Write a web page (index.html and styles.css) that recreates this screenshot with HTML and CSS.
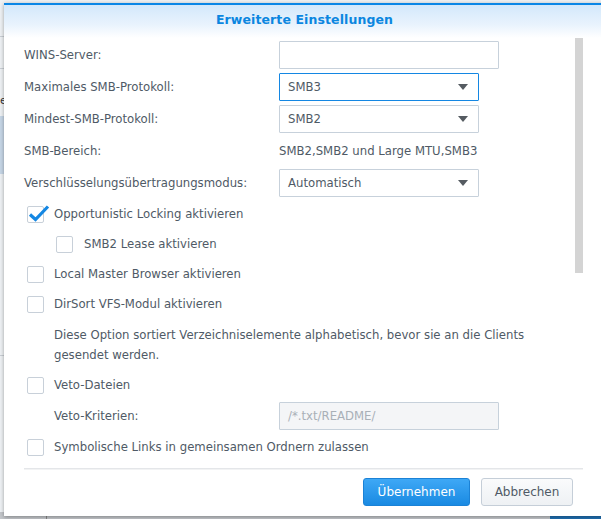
FILE: index.html
```html
<!DOCTYPE html>
<html lang="de">
<head>
<meta charset="utf-8">
<link rel="stylesheet" href="styles.css">
</head>
<body>
<div class="desk">
  <div class="side">
    <div class="side-line l1"></div>
    <div class="side-line l2"></div>
    <div class="side-text">el</div>
    <div class="side-sel"></div>
    <div class="side-line l3"></div>
  </div>
  <div class="taskbar"><div class="task-sep"></div><div class="task-blue"></div></div>

  <div class="dialog">
    <div class="hdr">Erweiterte Einstellungen</div>
    <div class="content">
      <div class="scroll">
        <div class="row">
          <span class="lbl">WINS-Server:</span>
          <div class="field wide"></div>
        </div>
        <div class="row">
          <span class="lbl">Maximales SMB-Protokoll:</span>
          <div class="field select focus"><span>SMB3</span><span class="arrow"></span></div>
        </div>
        <div class="row">
          <span class="lbl">Mindest-SMB-Protokoll:</span>
          <div class="field select"><span>SMB2</span><span class="arrow"></span></div>
        </div>
        <div class="row">
          <span class="lbl">SMB-Bereich:</span>
          <span class="value">SMB2,SMB2 und Large MTU,SMB3</span>
        </div>
        <div class="row">
          <span class="lbl">Verschlüsselungsübertragungsmodus:</span>
          <div class="field select"><span>Automatisch</span><span class="arrow"></span></div>
        </div>

        <div class="cbrow">
          <span class="cb checked"><svg class="tick" width="22" height="18" viewBox="0 0 22 18"><path d="M2 9.5 L7.5 14.5 L20 1.5" fill="none" stroke="#1487e3" stroke-width="3.2" stroke-linecap="butt" stroke-linejoin="miter"/></svg></span>
          <span class="cblbl">Opportunistic Locking aktivieren</span>
        </div>
        <div class="cbrow sub">
          <span class="cb"></span>
          <span class="cblbl">SMB2 Lease aktivieren</span>
        </div>
        <div class="cbrow">
          <span class="cb"></span>
          <span class="cblbl">Local Master Browser aktivieren</span>
        </div>
        <div class="cbrow">
          <span class="cb"></span>
          <span class="cblbl">DirSort VFS-Modul aktivieren</span>
        </div>
        <p class="desc">Diese Option sortiert Verzeichniselemente alphabetisch, bevor sie an die Clients gesendet werden.</p>
        <div class="cbrow">
          <span class="cb"></span>
          <span class="cblbl">Veto-Dateien</span>
        </div>
        <div class="row indent">
          <span class="lbl short">Veto-Kriterien:</span>
          <div class="field wide disabled"><span>/*.txt/README/</span></div>
        </div>
        <div class="cbrow">
          <span class="cb"></span>
          <span class="cblbl">Symbolische Links in gemeinsamen Ordnern zulassen</span>
        </div>
      </div>
      <div class="scrollbar"></div>
    </div>
    <div class="footer">
      <div class="divider"></div>
      <div class="buttons">
        <button class="btn primary">Übernehmen</button>
        <button class="btn">Abbrechen</button>
      </div>
    </div>
  </div>
</div>
</body>
</html>
```

FILE: styles.css
```css
* { box-sizing: border-box; }
html, body { margin: 0; padding: 0; }
body {
  width: 601px;
  height: 519px;
  overflow: hidden;
  font-family: "DejaVu Sans", Verdana, sans-serif;
  font-size: 11.7px;
  color: #4f5a66;
}
.desk {
  position: relative;
  width: 601px;
  height: 519px;
  background: #eef1f4;
  overflow: hidden;
}
.side { position: absolute; left: 0; top: 0; width: 10px; height: 519px; overflow: hidden; }
.side-line { position: absolute; left: 0; width: 10px; height: 1px; background: #c9ced4; }
.side-line.l1 { top: 36px; }
.side-line.l2 { top: 68px; }
.side-line.l3 { top: 355px; }
.side-sel { position: absolute; left: 0; top: 116px; width: 10px; height: 58px; background: #c6d6e6; }
.side-text { position: absolute; left: 0; top: 94px; font-size: 11px; color: #333; }
.taskbar { position: absolute; left: 0; top: 512px; width: 601px; height: 7px; background: #c3c6ca; }
.task-sep { position: absolute; left: 46px; top: 0; width: 1px; height: 7px; background: #888; }
.task-blue { position: absolute; left: 550px; top: 0; width: 51px; height: 7px; background: #1f6fb2; }

.dialog {
  position: absolute;
  left: 4px;
  top: 3px;
  width: 601px;
  height: 513px;
  background: #fff;
  border-top: 2px solid #0a86e6;
  box-shadow: 0 1px 4px rgba(0,0,0,0.35);
  display: flex;
  flex-direction: column;
}
.hdr {
  height: 33px;
  flex: none;
  background: linear-gradient(to bottom, #d3e8fb 0%, #e9f3fd 60%, #ffffff 100%);
  text-align: center;
  font-weight: bold;
  font-size: 12.5px;
  color: #0b86e0;
  padding-top: 7px;
  line-height: 16px;
  letter-spacing: 0.1px;
}
.content {
  position: relative;
  height: 427px;
  flex: none;
}
.scroll {
  padding: 2px 0 0 20px;
  display: flex;
  flex-direction: column;
}
.scrollbar {
  position: absolute;
  left: 571px;
  top: 0;
  width: 8px;
  height: 235px;
  background: #d4d4d4;
}
.row {
  height: 32px;
  display: flex;
  align-items: center;
}
.row:first-child { margin-top: -1px; }
.lbl { width: 255px; flex: none; }
.row.indent { padding-left: 30px; }
.lbl.short { width: 225px; }
.field {
  height: 28px;
  border: 1px solid #c7d1db;
  border-radius: 1px;
  display: flex;
  align-items: center;
  padding: 0 8px;
  width: 200px;
  background: #fff;
}
.field.wide { width: 220px; }
.field.select { justify-content: space-between; padding-right: 10px; }
.field.focus { border-color: #1487e3; }
.field.disabled { background: #f4f5f7; color: #a9b0b7; }
.arrow {
  width: 0; height: 0;
  border-left: 5px solid transparent;
  border-right: 5px solid transparent;
  border-top: 6px solid #555b61;
}
.cbrow {
  height: 30px;
  display: flex;
  align-items: center;
  padding-left: 3px;
}
.cbrow.sub { padding-left: 32px; }
.cb {
  position: relative;
  width: 17px;
  height: 17px;
  border: 1px solid #c8d0d9;
  border-radius: 2px;
  flex: none;
  margin-right: 10px;
  background: #fff;
}
.cbrow.sub .cb { margin-right: 11px; }
.tick { position: absolute; left: 0; top: -2px; overflow: visible; }
.desc {
  margin: 0;
  padding: 6px 40px 5px 30px;
  line-height: 20px;
}
.footer { flex: none; }
.divider {
  margin: 3px 22px 0 20px;
  height: 2px;
  background: #e4e6e9;
  border-bottom: 1px solid #f2f3f4;
}
.buttons {
  display: flex;
  justify-content: flex-end;
  gap: 11px;
  padding: 8px 32px 0 0;
}
.btn {
  height: 28px;
  font-family: inherit;
  font-size: 12px;
  border-radius: 3px;
  border: 1px solid #c5ced8;
  background: linear-gradient(#fafbfc, #eef1f4);
  color: #4f5a66;
  padding: 0;
  width: 92px;
}
.btn.primary {
  width: 107px;
  border-color: #1b82d6;
  background: linear-gradient(#3ea8f6, #1a8ae2);
  color: #fff;
}
```
